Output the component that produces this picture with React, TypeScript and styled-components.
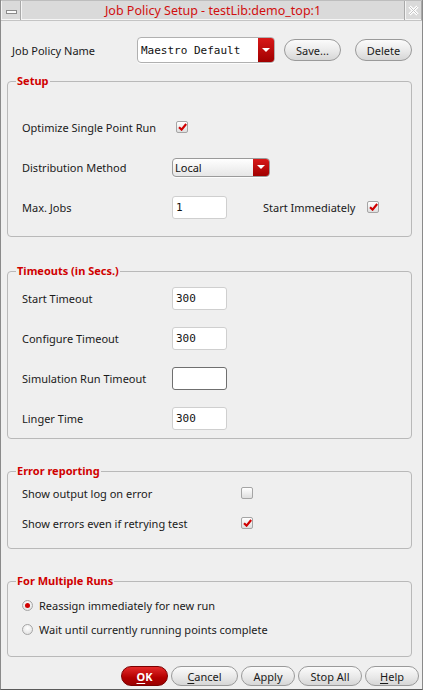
import React from "react";
import styled, { createGlobalStyle } from "styled-components";

const Global = createGlobalStyle`
  html, body { margin: 0; padding: 0; background: #efefef; }
  body { font-family: "Noto Sans", "DejaVu Sans", sans-serif; font-size: 11px; color: #1a1a1a; }
  * { box-sizing: border-box; }
`;

const Window = styled.div`
  width: 423px;
  height: 690px;
  background: #efefef;
  border-left: 1px solid #8a8a8a;
  border-right: 1px solid #8a8a8a;
  border-bottom: 1px solid #5a5a5a;
  display: flex;
  flex-direction: column;
`;

const TitleBar = styled.div`
  height: 21px;
  display: flex;
  align-items: stretch;
  background: #dadada;
  border-top: 1px solid #bdbdbd;
  border-bottom: 1px solid #c4c4c4;
  box-shadow: inset 0 -1px 0 #f6f6f6;
`;

const TitleBox = styled.div<{ $w: number }>`
  width: ${(p) => p.$w}px;
  display: flex;
  align-items: center;
  justify-content: center;
  border-left: 1px solid #f4f4f4;
  border-right: 1px solid #a9a9a9;
`;

const TitleText = styled.div`
  flex: 1;
  display: flex;
  align-items: center;
  justify-content: center;
  color: #d10f0f;
  font-size: 12.5px;
  border-left: 1px solid #f4f4f4;
  border-right: 1px solid #a9a9a9;
`;

const MinIcon = styled.div`
  width: 11px;
  height: 4px;
  border: 1px solid #8a8a8a;
  background: #fafafa;
  margin-top: 2px;
`;

const Body = styled.div`
  flex: 1;
  display: flex;
  flex-direction: column;
  padding: 0 10px 0 6px;
`;

const HeaderRow = styled.div`
  display: flex;
  align-items: center;
  height: 26px;
  margin-top: 16px;
  padding-left: 5px;
`;

const Label = styled.span<{ $w?: number; $ml?: number }>`
  display: inline-block;
  width: ${(p) => (p.$w ? `${p.$w}px` : "auto")};
  margin-left: ${(p) => p.$ml ?? 0}px;
  flex: none;
  white-space: nowrap;
`;

const Combo = styled.div<{ $w: number; $h: number; $plain?: boolean }>`
  width: ${(p) => p.$w}px;
  height: ${(p) => p.$h}px;
  display: flex;
  align-items: stretch;
  border: 1px solid ${(p) => (p.$plain ? "#9a9a9a" : "#b0b0b0")};
  border-radius: 4px;
  overflow: hidden;
  background: ${(p) => (p.$plain ? "linear-gradient(#ffffff, #e6e6e6)" : "#ffffff")};
  box-shadow: 0 1px 0 rgba(255, 255, 255, 0.8);
`;

const ComboText = styled.span<{ $mono?: boolean }>`
  flex: 1;
  display: flex;
  align-items: center;
  padding-left: ${(p) => (p.$mono ? 3 : 2)}px;
  font-family: ${(p) => (p.$mono ? `"DejaVu Sans Mono", monospace` : `"Noto Sans", sans-serif`)};
  font-size: 11px;
  color: #111;
`;

const ComboArrow = styled.span`
  width: 16px;
  display: flex;
  align-items: center;
  justify-content: center;
  background: linear-gradient(#d81818, #a00000);
  &::after {
    content: "";
    border-left: 4px solid transparent;
    border-right: 4px solid transparent;
    border-top: 4px solid #ffffff;
  }
`;

const Button = styled.button<{ $w: number; $h: number; $ml?: number; $primary?: boolean }>`
  width: ${(p) => p.$w}px;
  height: ${(p) => p.$h}px;
  margin-left: ${(p) => p.$ml ?? 0}px;
  flex: none;
  padding: 0;
  border-radius: ${(p) => p.$h / 2}px;
  border: 1px solid ${(p) => (p.$primary ? "#7a0000" : "#9a9a9a")};
  background: ${(p) =>
    p.$primary ? "linear-gradient(#e42a2a, #b30000 60%, #9a0000)" : "linear-gradient(#fbfbfb, #e9e9e9 55%, #d6d6d6)"};
  color: ${(p) => (p.$primary ? "#ffffff" : "#1a1a1a")};
  font-family: "Noto Sans", sans-serif;
  font-size: 11px;
  font-weight: ${(p) => (p.$primary ? 700 : 400)};
  line-height: 1;
  display: flex;
  align-items: center;
  justify-content: center;
  & u { text-underline-offset: 2px; }
`;

const Group = styled.fieldset<{ $pt: number; $pb: number }>`
  margin: 0;
  border: 1px solid #b9b9b9;
  border-radius: 4px;
  padding: ${(p) => p.$pt}px 0 ${(p) => p.$pb}px 8px;
  min-width: 0;
`;

const Legend = styled.legend`
  padding: 0 1px;
  font-weight: 700;
  color: #d00000;
  line-height: 14px;
  font-size: 11px;
`;

const Row = styled.div<{ $h: number }>`
  height: ${(p) => p.$h}px;
  display: flex;
  align-items: center;
  padding-left: 6px;
`;

const TextInput = styled.div<{ $focus?: boolean }>`
  width: 55px;
  height: 23px;
  flex: none;
  background: #ffffff;
  border: 1px solid ${(p) => (p.$focus ? "#6f6f6f" : "#cfcfcf")};
  border-radius: 3px;
  display: flex;
  align-items: center;
  padding-left: 3px;
  font-family: "DejaVu Sans Mono", monospace;
  font-size: 11px;
  color: #111;
`;

const CheckBox = styled.span<{ $ml?: number }>`
  width: 12px;
  height: 12px;
  flex: none;
  margin-left: ${(p) => p.$ml ?? 0}px;
  border: 1px solid #a5a5a5;
  border-radius: 2px;
  background: linear-gradient(#ffffff, #dedede);
  display: flex;
  align-items: center;
  justify-content: center;
`;

const Radio = styled.span<{ $on?: boolean }>`
  width: 11px;
  height: 11px;
  flex: none;
  border-radius: 50%;
  border: 1px solid #a5a5a5;
  background: radial-gradient(circle at 50% 35%, #ffffff, #dcdcdc);
  display: flex;
  align-items: center;
  justify-content: center;
  margin-right: 6px;
  &::after {
    content: "";
    display: ${(p) => (p.$on ? "block" : "none")};
    width: 5px;
    height: 5px;
    border-radius: 50%;
    background: #d00000;
  }
`;

const Spacer = styled.div<{ $h: number }>`
  height: ${(p) => p.$h}px;
  flex: none;
`;

const ButtonRow = styled.div`
  display: flex;
  justify-content: flex-end;
  gap: 3px;
  margin: 9px -7px 0 0;
`;

const Check = ({ on, ml }: { on: boolean; ml?: number }) => (
  <CheckBox $ml={ml}>
    {on && (
      <svg width="9" height="8" viewBox="0 0 9 8">
        <path d="M1 4.2 L3.6 6.6 L8.2 1" stroke="#d00000" strokeWidth="2.2" fill="none" />
      </svg>
    )}
  </CheckBox>
);

export default function App() {
  return (
    <>
      <Global />
      <Window>
        <TitleBar>
          <TitleBox $w={20}>
            <MinIcon />
          </TitleBox>
          <TitleText>Job Policy Setup - testLib:demo_top:1</TitleText>
          <TitleBox $w={17}>
            <svg width="11" height="11" viewBox="0 0 11 11">
              <path d="M1.5 1.5 L9.5 9.5 M9.5 1.5 L1.5 9.5" stroke="#ffffff" strokeWidth="3" />
              <path d="M1.5 1.5 L9.5 9.5 M9.5 1.5 L1.5 9.5" stroke="#c4c4c4" strokeWidth="1" />
            </svg>
          </TitleBox>
        </TitleBar>
        <Body>
          <HeaderRow>
            <Label $w={125}>Job Policy Name</Label>
            <Combo $w={142} $h={26}>
              <ComboText $mono>Maestro Default</ComboText>
              <ComboArrow />
            </Combo>
            <Button $w={57} $h={22} $ml={9}>Save...</Button>
            <Button $w={57} $h={22} $ml={14}>Delete</Button>
          </HeaderRow>

          <Spacer $h={11} />
          <Group $pt={19} $pb={9}>
            <Legend>Setup</Legend>
            <Row $h={40}>
              <Label $w={150}>Optimize Single Point Run</Label>
              <Check on ml={4} />
            </Row>
            <Row $h={40}>
              <Label $w={150}>Distribution Method</Label>
              <Combo $w={98} $h={19} $plain>
                <ComboText>Local</ComboText>
                <ComboArrow />
              </Combo>
            </Row>
            <Row $h={40}>
              <Label $w={150}>Max. Jobs</Label>
              <TextInput>1</TextInput>
              <Label $ml={36}>Start Immediately</Label>
              <Check on ml={12} />
            </Row>
          </Group>

          <Spacer $h={27} />
          <Group $pt={0} $pb={0}>
            <Legend>Timeouts (in Secs.)</Legend>
            <Row $h={40}>
              <Label $w={150}>Start Timeout</Label>
              <TextInput>300</TextInput>
            </Row>
            <Row $h={40}>
              <Label $w={150}>Configure Timeout</Label>
              <TextInput>300</TextInput>
            </Row>
            <Row $h={40}>
              <Label $w={150}>Simulation Run Timeout</Label>
              <TextInput $focus />
            </Row>
            <Row $h={40}>
              <Label $w={150}>Linger Time</Label>
              <TextInput>300</TextInput>
            </Row>
          </Group>

          <Spacer $h={25} />
          <Group $pt={0} $pb={10}>
            <Legend>Error reporting</Legend>
            <Row $h={30}>
              <Label $w={219}>Show output log on error</Label>
              <Check on={false} />
            </Row>
            <Row $h={30}>
              <Label $w={219}>Show errors even if retrying test</Label>
              <Check on />
            </Row>
          </Group>

          <Spacer $h={25} />
          <Group $pt={5} $pb={15}>
            <Legend>For Multiple Runs</Legend>
            <Row $h={24}>
              <Radio $on />
              <Label>Reassign immediately for new run</Label>
            </Row>
            <Row $h={24}>
              <Radio />
              <Label>Wait until currently running points complete</Label>
            </Row>
          </Group>

          <ButtonRow>
            <Button $w={47} $h={20} $primary>
              <u>O</u>K
            </Button>
            <Button $w={67} $h={20}>
              <u>C</u>ancel
            </Button>
            <Button $w={54} $h={20}>Apply</Button>
            <Button $w={64} $h={20}>Stop All</Button>
            <Button $w={54} $h={20}>
              <u>H</u>elp
            </Button>
          </ButtonRow>
        </Body>
      </Window>
    </>
  );
}
